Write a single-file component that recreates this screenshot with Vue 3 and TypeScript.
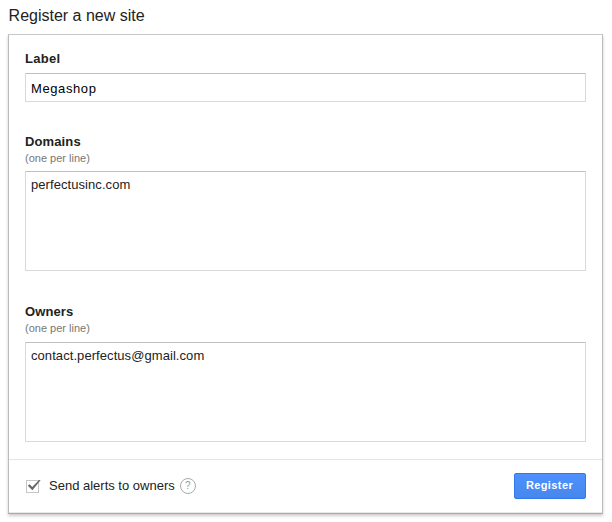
<script setup lang="ts">
import { ref } from 'vue'

const label = ref<string>('Megashop')
const domains = ref<string>('perfectusinc.com')
const owners = ref<string>('contact.perfectus@gmail.com')
const sendAlerts = ref<boolean>(true)
</script>

<template>
  <main class="page">
    <h1 class="title">Register a new site</h1>
    <form class="card" @submit.prevent>
      <div class="fields">
        <section class="group group-label">
          <label class="name" for="label">Label</label>
          <input id="label" v-model="label" class="control single" type="text" />
        </section>
        <section class="group group-domains">
          <label class="name" for="domains">Domains</label>
          <span class="hint">(one per line)</span>
          <textarea id="domains" v-model="domains" class="control multi" spellcheck="false"></textarea>
        </section>
        <section class="group group-owners">
          <label class="name" for="owners">Owners</label>
          <span class="hint">(one per line)</span>
          <textarea id="owners" v-model="owners" class="control multi mail" spellcheck="false"></textarea>
        </section>
      </div>
      <footer class="footer">
        <button class="check" type="button" role="checkbox" :aria-checked="sendAlerts" @click="sendAlerts = !sendAlerts">
          <svg width="16" height="15" viewBox="0 0 16 15">
            <rect x="0.5" y="1.5" width="12" height="12" fill="#fff" stroke="#c6c6c6" />
            <path v-if="sendAlerts" d="M1.8 6.8L3.6 5.3L6.2 8L13 1L14.6 1.2L6.4 11.2Z" fill="#666" />
          </svg>
        </button>
        <span class="alerts">Send alerts to owners</span>
        <span class="help">?</span>
        <button class="register" type="submit">Register</button>
      </footer>
    </form>
  </main>
</template>

<style>
body {
  background: #fff;
}
</style>

<style scoped>
.page {
  box-sizing: border-box;
  width: 612px;
  height: 522px;
  padding: 6px 9px 0 8px;
  overflow: hidden;
  font-family: "Liberation Sans", Arial, sans-serif;
  color: #222;
}
.title {
  margin: 0;
  height: 28px;
  padding-left: 0.6px;
  font-size: 16px;
  line-height: 19px;
  font-weight: 400;
}
.card {
  box-sizing: border-box;
  width: 595px;
  height: 480px;
  border: 1px solid #bbb;
  border-top-color: #c8c8c8;
  border-bottom-color: #aaa;
  box-shadow: 0 2px 3px rgba(0, 0, 0, 0.2), inset 0 -1px 0 #e9e9e9;
  display: flex;
  flex-direction: column;
}
.fields {
  box-sizing: border-box;
  height: 424px;
  padding: 15px 16px 0;
}
.group {
  display: flex;
  flex-direction: column;
}
.group-label {
  height: 83px;
}
.group-domains {
  height: 170px;
}
.name {
  height: 18px;
  font-size: 13px;
  line-height: 18px;
  font-weight: 700;
  letter-spacing: 0.12px;
}
.group-label .name {
  letter-spacing: 0.3px;
}
.hint {
  height: 16px;
  font-size: 11px;
  line-height: 14px;
  color: #777;
}
.control {
  box-sizing: border-box;
  width: 561px;
  margin: 5px 0 0;
  padding: 4px 5px;
  border: 1px solid #d9d9d9;
  border-top-color: #c0c0c0;
  border-radius: 0;
  outline: 0;
  background: #fff;
  color: #222;
  font: 13px/18px "Liberation Sans", Arial, sans-serif;
  letter-spacing: 0.07px;
  resize: none;
}
.single {
  height: 29px;
  padding: 2px 5px 1px;
  color: #000;
  letter-spacing: 0.6px;
}
.multi {
  height: 100px;
  margin-top: 4px;
  overflow: hidden;
}
.mail {
  margin-top: 5px;
}
.footer {
  flex: 1;
  display: flex;
  align-items: center;
  padding: 0 16px 1px;
  border-top: 1px solid #e5e5e5;
}
.check {
  width: 16px;
  height: 15px;
  margin: 0 7px 0 1px;
  padding: 0;
  border: 0;
  background: none;
}
.check svg {
  display: block;
}
.alerts {
  font-size: 13px;
  line-height: 18px;
}
.help {
  box-sizing: border-box;
  width: 16px;
  height: 16px;
  margin-left: 5px;
  border: 1px solid #aaa;
  border-radius: 50%;
  color: #999;
  font-size: 10px;
  line-height: 14px;
  text-align: center;
}
.register {
  box-sizing: border-box;
  width: 72px;
  height: 26px;
  margin-left: auto;
  padding: 0 1px 1px 0;
  border: 1px solid #3079ed;
  border-radius: 2px;
  background: linear-gradient(#4d90fe, #4787ed);
  color: #fff;
  font: 700 11px/23px "Liberation Sans", Arial, sans-serif;
  letter-spacing: 0.4px;
}
</style>
